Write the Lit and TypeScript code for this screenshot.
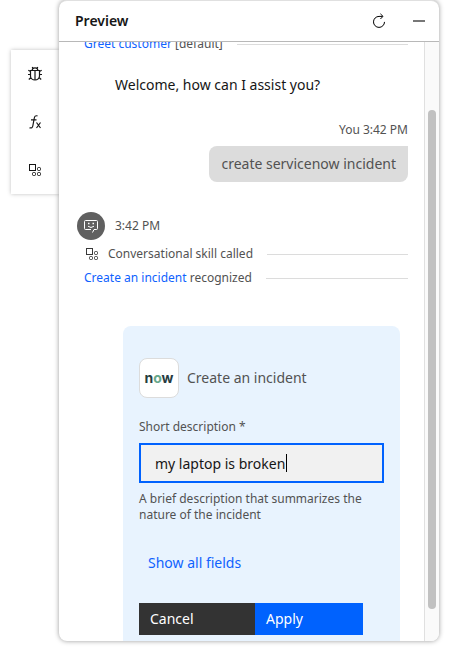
import { LitElement, html, css, svg } from "lit";
import { customElement, query } from "lit/decorators.js";

const skillShapes = svg`
  <rect x="2.5" y="2.5" width="6" height="6" />
  <rect x="10.5" y="5.5" width="3" height="3" rx="1" />
  <rect x="5.5" y="10.5" width="3" height="3" rx="1" />
  <rect x="10.5" y="10.5" width="3" height="3" rx="1" />`;

const icon = (shapes: unknown, size = 16) => html`<svg
  class="icon"
  width=${size}
  height=${size}
  viewBox="0 0 16 16"
  aria-hidden="true"
>
  ${shapes}
</svg>`;

const bugShapes = svg`
  <path
    stroke-width="1.2"
    d="M3.5 4.500h9v5.500a4.500 4 0 0 1-9 0z M5.200 4.300a2.800 2.500 0 0 1 5.600 0 M6 2.500L5.200 1 M10 2.500l.8-1.500 M3.500 8.500H1 M12.500 8.500H15 M3.500 5.500L1.300 4.300 M12.500 5.500l2.200-1.200 M4 11.500l-2.200 2 M12 11.500l2.200 2"
  />
  <path d="M7.500 5v9 M8.500 5v9" stroke-opacity=".6" />`;

const functionShapes = svg`
  <path
    stroke-width="1.2"
    d="M10.500 1.900C8.300 1.300 7.600 2.500 7.300 4L5.800 12c-.3 1.700-1.200 2.200-3.300 1.800 M4 5.800h5.500"
  />
  <path stroke-width="1.2" d="M9.500 8.500l4 5.500 M13.500 8.500l-4 5.500" />`;

const restartShapes = svg`
  <path d="M11.600 3.400H8A5.500 5.500 0 1 0 13.500 8.900 M9.400 .8l2.600 2.600-2.600 2.600" />`;

@customElement("app-root")
export class AppRoot extends LitElement {
  @query(".transcript") private transcript!: HTMLElement;

  static styles = css`
    :host {
      display: block;
      height: 100vh;
      overflow: hidden;
      box-sizing: border-box;
      padding: 0 10px 12px 11px;
      background: #fff;
      color: #525252;
      font: 12px/16px "Noto Sans", sans-serif;
    }
    * {
      box-sizing: border-box;
    }
    button,
    input {
      font: inherit;
      border: 0;
      border-radius: 0;
      margin: 0;
      padding: 0;
    }
    button {
      background: none;
      cursor: pointer;
    }
    a {
      color: #0f62fe;
      text-decoration: none;
    }
    p,
    h1,
    h2 {
      margin: 0;
      font-weight: 400;
    }
    .layout {
      display: flex;
      align-items: flex-start;
      height: 100%;
    }
    .rail {
      display: flex;
      flex-direction: column;
      flex: none;
      width: 48px;
      margin-top: 50px;
      box-shadow: 0 0 4px rgba(0, 0, 0, 0.25);
    }
    .tool {
      display: grid;
      place-items: center;
      height: 48px;
      color: #161616;
    }
    .icon {
      display: block;
      flex: none;
      fill: none;
      stroke: currentColor;
    }
    .panel {
      position: relative;
      display: flex;
      flex-direction: column;
      flex: 1;
      min-width: 0;
      height: 100%;
      overflow: hidden;
      background: #fff;
      border-top: 1px solid #e0e0e0;
      border-radius: 8px;
      box-shadow: 0 0 5px rgba(0, 0, 0, 0.4);
    }
    .header {
      display: flex;
      align-items: center;
      gap: 24px;
      flex: none;
      height: 41px;
      padding: 0 12px 0 16px;
      border-bottom: 1px solid #b8b8b8;
      color: #161616;
    }
    .title {
      flex: 1;
      font-size: 14px;
      line-height: 20px;
      font-weight: 600;
    }
    .body {
      display: flex;
      flex: 1;
      min-height: 0;
    }
    .transcript {
      flex: 1;
      min-width: 0;
      overflow: hidden;
      padding: 0 16px 0 18px;
    }
    .track {
      flex: none;
      width: 15px;
      padding: 68px 3px 32px;
      background: #fafafa;
      border-left: 1px solid #e0e0e0;
    }
    .thumb {
      width: 8px;
      height: 100%;
      border-radius: 4px;
      background: #c1c1c1;
    }
    .event {
      display: flex;
      align-items: center;
      height: 20px;
      margin-left: 7px;
      white-space: pre;
    }
    .event + .event {
      margin-top: 4px;
    }
    .event::after {
      content: "";
      flex: 1;
      height: 1px;
      margin-left: 14px;
      background: #dcdcdc;
    }
    .event .icon {
      margin-right: 8px;
      color: #393939;
    }
    .welcome {
      margin: 21px 0 0 38px;
      font-size: 14px;
      line-height: 20px;
      color: #161616;
    }
    .user {
      display: flex;
      flex-direction: column;
      align-items: flex-end;
      gap: 8px;
      margin-top: 27px;
    }
    .bubble {
      padding: 8px 12px;
      border-radius: 8px 0 8px 8px;
      background: #dcdcdc;
      font-size: 14px;
      line-height: 20px;
    }
    .bot {
      display: flex;
      align-items: center;
      gap: 10px;
      margin: 30px 0 4px;
    }
    .avatar {
      display: grid;
      place-items: center;
      width: 28px;
      height: 28px;
      border-radius: 50%;
      background: #606060;
      color: #fff;
    }
    .card {
      margin: 38px 8px 0 46px;
      padding: 32px 16px;
      border-radius: 8px;
      background: #e8f3fe;
    }
    .skill {
      display: flex;
      align-items: center;
      gap: 8px;
    }
    .skill h2 {
      font-size: 14px;
      line-height: 20px;
    }
    .logo {
      display: grid;
      place-items: center;
      width: 40px;
      height: 40px;
      border: 1px solid #dcdcdc;
      border-radius: 8px;
      background: #fff;
      color: #263c41;
      font: 700 14px/20px Inter, sans-serif;
    }
    .logo i {
      font-style: normal;
      color: #68a88c;
    }
    .label {
      display: block;
      margin: 21px 0 8px;
    }
    .field {
      position: relative;
    }
    .field input {
      display: block;
      width: 100%;
      height: 40px;
      padding: 0 14px;
      background: #f1f1f1;
      border: 2px solid #0062fe;
      outline: 0;
      color: #161616;
      font-size: 14px;
      line-height: 20px;
    }
    .caret {
      position: absolute;
      top: 11px;
      left: 147px;
      width: 1px;
      height: 18px;
      background: #000;
    }
    .help {
      margin-top: 8px;
    }
    .more {
      display: block;
      height: 32px;
      margin: 24px 0;
      padding: 0 9px;
      color: #0f62fe;
      font-size: 14px;
    }
    .actions {
      display: flex;
    }
    .actions button {
      height: 32px;
      padding: 0 11px;
      text-align: left;
      color: #fff;
      font-size: 14px;
    }
    .cancel {
      width: 116px;
      background: #333;
    }
    .apply {
      width: 108px;
      background: #0062fe;
    }
  `;

  firstUpdated() {
    this.transcript.scrollTop = 8;
  }

  render() {
    return html`
      <div class="layout">
        <nav class="rail" aria-label="Tools">
          <button class="tool" aria-label="Debug">${icon(bugShapes)}</button>
          <button class="tool" aria-label="Variables">${icon(functionShapes)}</button>
          <button class="tool" aria-label="Skills">${icon(skillShapes)}</button>
        </nav>
        <main class="panel">
          <header class="header">
            <h1 class="title">Preview</h1>
            <button aria-label="Restart">${icon(restartShapes)}</button>
            <button aria-label="Minimize">
              ${icon(svg`<path d="M2 8h12" stroke="#777" stroke-width="2" />`)}
            </button>
          </header>
          <div class="body">
            <div class="transcript">
              <div class="event"><a href="#">Greet customer</a> [default]</div>
              <p class="welcome">Welcome, how can I assist you?</p>
              <div class="user">
                <span>You 3:42 PM</span>
                <p class="bubble">create servicenow incident</p>
              </div>
              <div class="bot">
                <span class="avatar">
                  ${icon(svg`
                    <path d="M9.500 14.500l1.500-3h2.500a1 1 0 0 0 1-1v-7a1 1 0 0 0-1-1h-11a1 1 0 0 0-1 1v7a1 1 0 0 0 1 1H8 M5 8.200q3 2.600 6 0" />
                    <path d="M5 5.500h1.500 M9.500 5.500H11" stroke-width="1.500" />`)}
                </span>
                <span>3:42 PM</span>
              </div>
              <div class="event">${icon(skillShapes)}Conversational skill called</div>
              <div class="event"><a href="#">Create an incident</a> recognized</div>
              <form class="card" @submit=${(e: Event) => e.preventDefault()}>
                <div class="skill">
                  <span class="logo"><span>n<i>o</i>w</span></span>
                  <h2>Create an incident</h2>
                </div>
                <label class="label" for="short">Short description *</label>
                <div class="field">
                  <input id="short" type="text" value="my laptop is broken" aria-describedby="help" />
                  <span class="caret"></span>
                </div>
                <p class="help" id="help">
                  A brief description that summarizes the nature of the incident
                </p>
                <button class="more" type="button">Show all fields</button>
                <div class="actions">
                  <button class="cancel" type="button">Cancel</button>
                  <button class="apply" type="submit">Apply</button>
                </div>
              </form>
            </div>
            <div class="track"><div class="thumb"></div></div>
          </div>
        </main>
      </div>
    `;
  }
}
